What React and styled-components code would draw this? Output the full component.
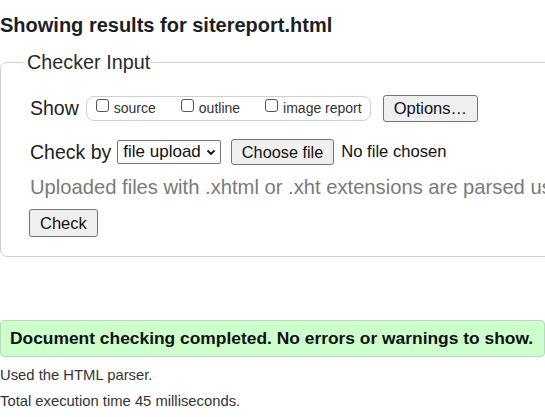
import React from "react";
import styled, { createGlobalStyle } from "styled-components";

const Global = createGlobalStyle`
  html, body {
    margin: 0;
    padding: 0;
    background: #fff;
  }
  body {
    font-family: "Liberation Sans", Arial, sans-serif;
    color: #222;
    overflow: hidden;
  }
`;

const Page = styled.div`
  width: 545px;
  height: 417px;
  overflow: hidden;
`;

const Heading = styled.h2`
  margin: 0;
  padding-top: 14px;
  font-size: 20px;
  line-height: 22px;
  font-weight: bold;
  color: #1c1e26;
  white-space: nowrap;
`;

const Fieldset = styled.fieldset`
  margin: 16px -40px 0 0;
  padding: 17px 0 17px 29px;
  border: 1px solid #cfcfcf;
  border-radius: 7px;
  min-width: 0;
  overflow: hidden;
`;

const Legend = styled.legend`
  margin-left: -7px;
  padding: 0 1px 0 4px;
  font-size: 19.8px;
  line-height: 20px;
  color: #2a2a2a;
`;

const Row = styled.div`
  display: flex;
  align-items: center;
  height: ${(p) => p.h || 30}px;
  margin-bottom: ${(p) => p.mb || 0}px;
  white-space: nowrap;
  font-size: 19.5px;
  color: #222;
`;

const Label = styled.span`
  margin-right: ${(p) => p.mr || 6}px;
`;

const CheckGroup = styled.span`
  display: inline-flex;
  align-items: center;
  height: 23px;
  padding: 0 8px 0 9px;
  border: 1px solid #cfcfcf;
  border-radius: 8px;
  font-size: 14px;
  gap: 25px;
`;

const CheckItem = styled.label`
  display: inline-flex;
  align-items: center;
  gap: 5px;
  color: #333;
`;

const Box = styled.span`
  display: inline-block;
  width: 11px;
  height: 11px;
  border: 1px solid #555;
  border-radius: 3px;
  margin-top: -5px;
  background: #fff;
`;

const Button = styled.button`
  font-family: "Liberation Sans", Arial, sans-serif;
  font-size: ${(p) => p.fs || 16.5}px;
  color: #111;
  background: #efefef;
  border: 1px solid #767676;
  border-radius: 3px;
  height: ${(p) => p.h || 26}px;
  padding: 0 ${(p) => p.px || 10}px;
  margin-left: ${(p) => p.ml || 0}px;
  line-height: 1;
`;

const Select = styled.span`
  display: inline-flex;
  align-items: center;
  gap: 5px;
  height: 22px;
  padding: 0 4px 0 5px;
  border: 1px solid #767676;
  border-radius: 2px;
  font-size: 17px;
  color: #111;
  background: #fff;
`;

const FileName = styled.span`
  margin-left: 7px;
  font-size: 16.6px;
  color: #111;
`;

const Hint = styled.div`
  font-size: 20.2px;
  color: #7a7a7a;
  white-space: nowrap;
  height: 34px;
  line-height: 34px;
  margin-bottom: 3px;
`;

const Success = styled.div`
  margin-top: 63px;
  height: 35px;
  display: flex;
  align-items: center;
  padding-left: 9px;
  background: #ccffcc;
  border: 1px solid #bcd8bc;
  border-radius: 4px;
  font-size: 17.4px;
  font-weight: bold;
  color: #111;
  white-space: nowrap;
`;

const Note = styled.p`
  margin: ${(p) => p.mt || 0}px 0 0;
  font-size: 14.8px;
  line-height: 26px;
  color: #333;
`;

const Chevron = () => (
  <svg width="10" height="7" viewBox="0 0 10 7">
    <path d="M1.5 1.5 L5 5 L8.5 1.5" fill="none" stroke="#111" strokeWidth="1.8" />
  </svg>
);

export default function App() {
  return (
    <Page>
      <Global />
      <Heading>Showing results for sitereport.html</Heading>
      <Fieldset>
        <Legend>Checker Input</Legend>
        <Row h={38} mb={7}>
          <Label mr={7}>Show</Label>
          <CheckGroup>
            <CheckItem><Box />source</CheckItem>
            <CheckItem><Box />outline</CheckItem>
            <CheckItem><Box />image report</CheckItem>
          </CheckGroup>
          <Button ml={12} h={27} px={10}>Options…</Button>
        </Row>
        <Row h={36}>
          <Label mr={6}>Check by</Label>
          <Select>file upload <Chevron /></Select>
          <Button ml={10} h={26} px={10} fs={16.3}>Choose file</Button>
          <FileName>No file chosen</FileName>
        </Row>
        <Hint>Uploaded files with .xhtml or .xht extensions are parsed using the XML parser.</Hint>
        <Row h={32}>
          <Button ml={-1} h={28} px={10}>Check</Button>
        </Row>
      </Fieldset>
      <Success>Document checking completed. No errors or warnings to show.</Success>
      <Note mt={5}>Used the HTML parser.</Note>
      <Note>Total execution time 45 milliseconds.</Note>
    </Page>
  );
}
